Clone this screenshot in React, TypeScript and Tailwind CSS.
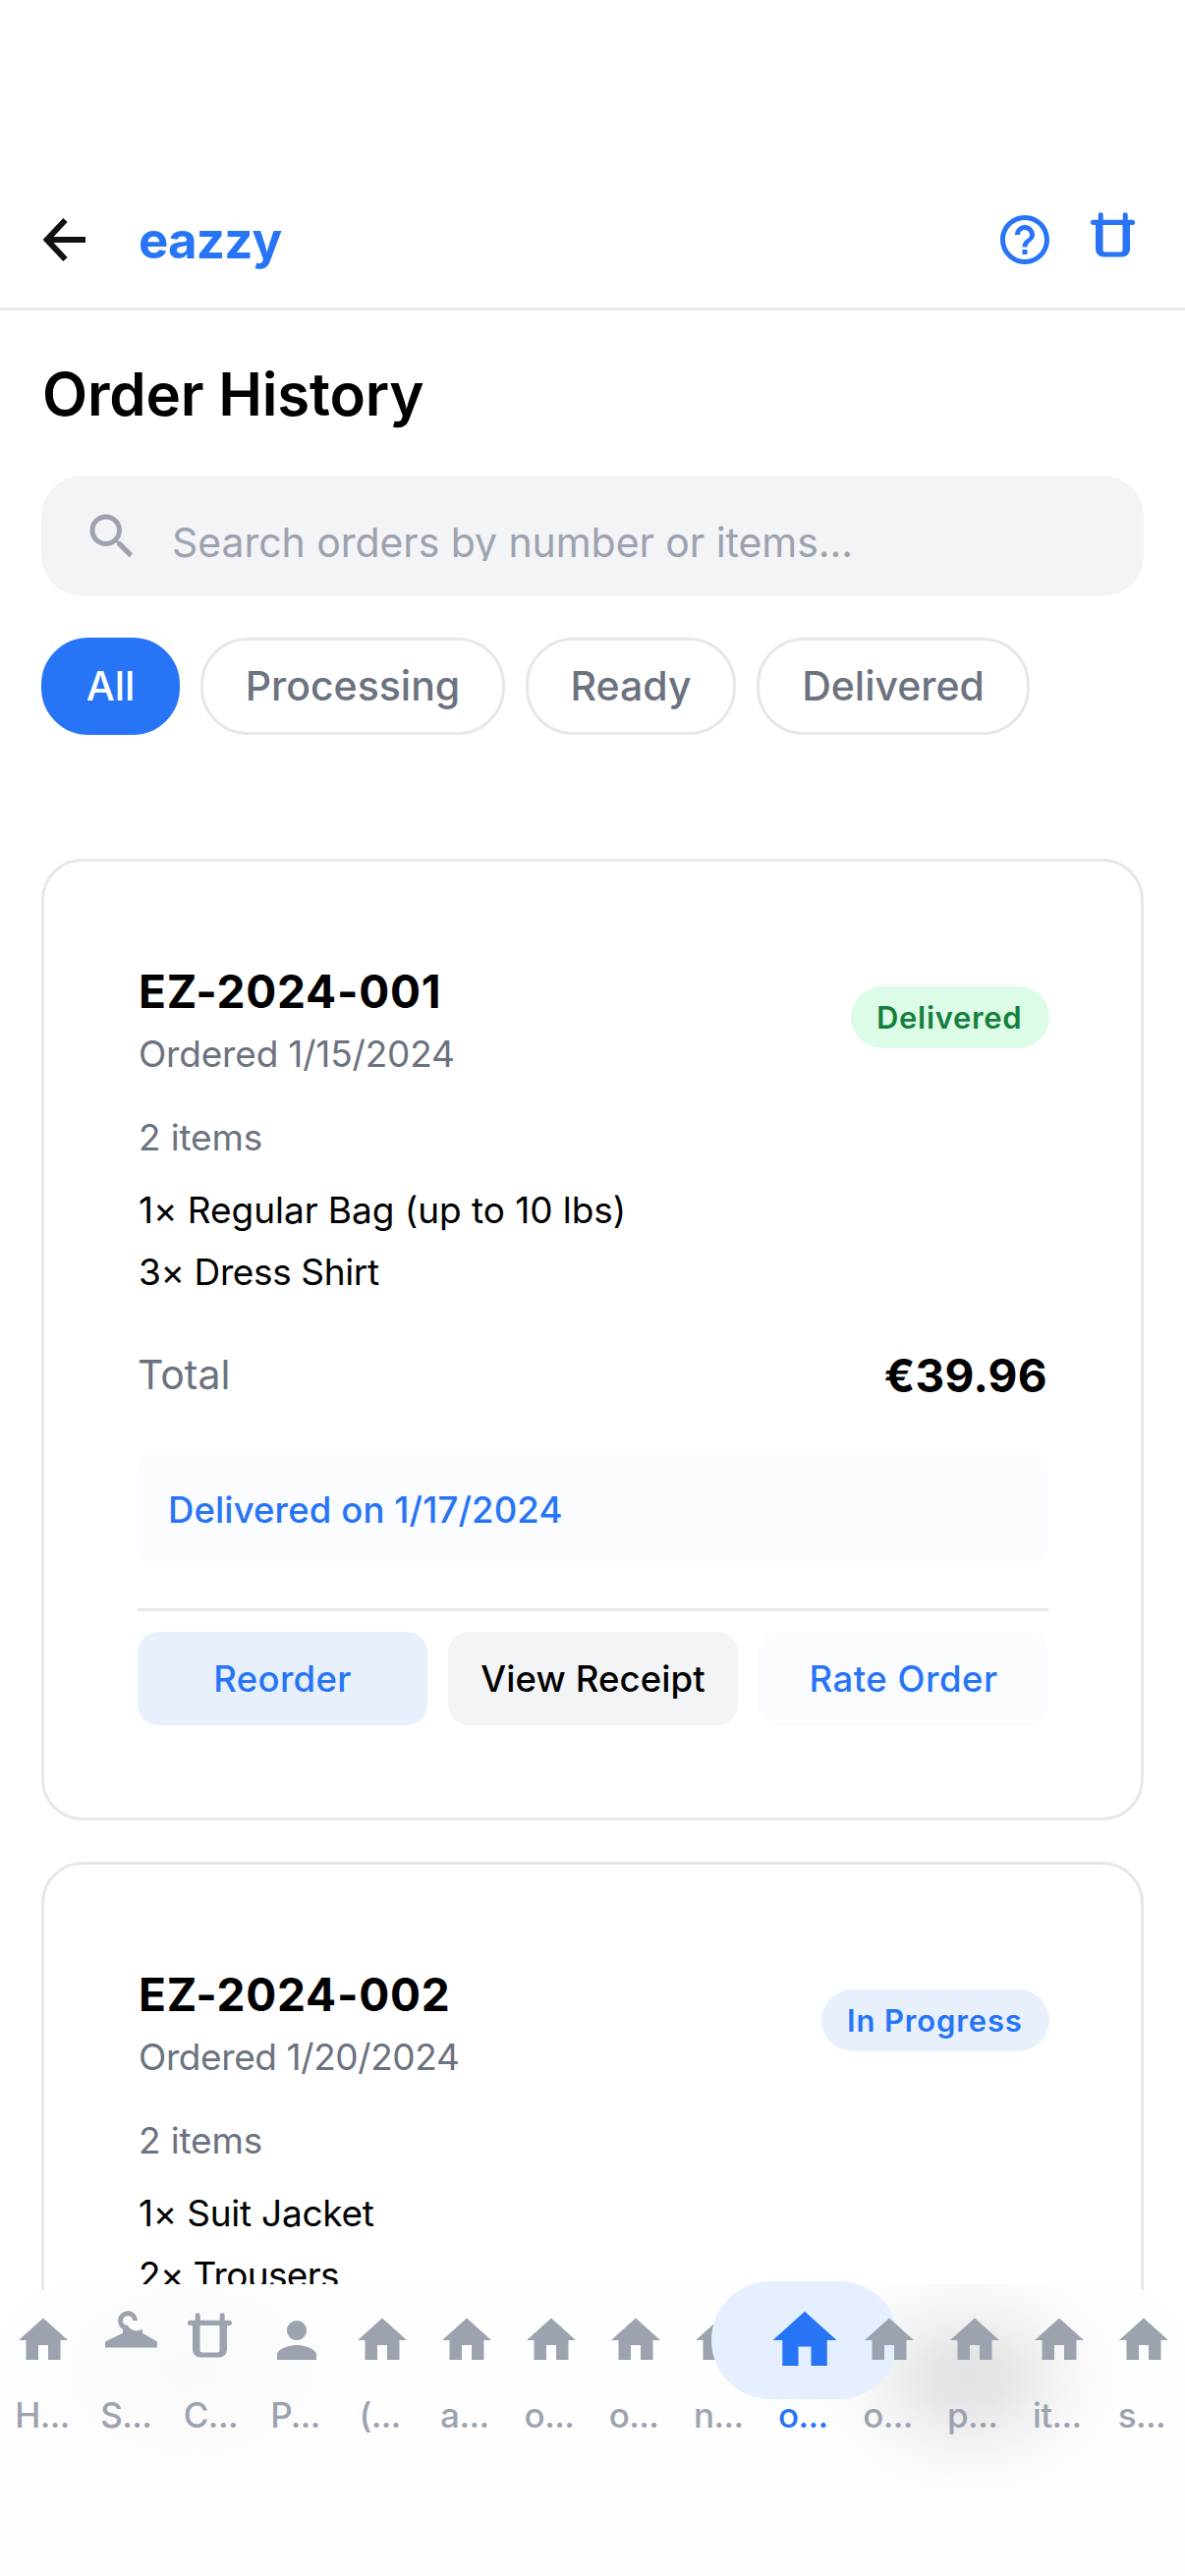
import React from 'react';
import { MdHelpOutline, MdHome, MdPerson, MdSearch } from 'react-icons/md';
import clsx from 'clsx';

function BackArrow() {
  return (
    <svg viewBox="0 0 46 46" className="size-[46px]" fill="none" stroke="#111111" strokeWidth="6">
      <path d="M24.5 3 L5.7 23 L24.5 43" />
      <path d="M6.5 23 H45" />
    </svg>
  );
}

function Basket() {
  return (
    <svg viewBox="0 0 60 60" className="size-[60px]" fill="currentColor">
      <rect x="12.7" y="2.2" width="5" height="14" rx="2.5" />
      <rect x="37.7" y="2.2" width="5" height="14" rx="2.5" />
      <rect x="5" y="9.8" width="45" height="5.2" rx="2.5" />
      <path
        fillRule="evenodd"
        d="M10 11 H45 V39.5 A8 8 0 0 1 37 47.5 H18 A8 8 0 0 1 10 39.5 Z M17.5 15 V40.5 A2 2 0 0 0 19.5 42.5 H35.5 A2 2 0 0 0 37.5 40.5 V15 Z"
      />
    </svg>
  );
}

function Hanger() {
  return (
    <svg viewBox="0 0 60 60" className="size-[60px] overflow-visible" fill="currentColor">
      <path d="M37.5 10 A7.5 7.5 0 1 0 26.5 16.8" fill="none" stroke="currentColor" strokeWidth="5" />
      <path d="M25 16 L28 14.5 L30 14.8 C31 18 36 20.8 40 20.6 Q43 20.2 45 18.5 V22.8 L60 31.5 V37.6 H7 V31.5 L25 22.8 Z" />
    </svg>
  );
}

const filters = [
  { label: 'All', width: 'w-[141px]' },
  { label: 'Processing', width: 'w-[310px]' },
  { label: 'Ready', width: 'w-[214px]' },
  { label: 'Delivered', width: 'w-[278px]' },
];

type Order = {
  number: string;
  ordered: string;
  orderedTracking: string;
  status: string;
  badge: string;
  count: string;
  items: { text: string; tracking: string }[];
  summary?: { total: string; note: string };
};

const orders: Order[] = [
  {
    number: 'EZ-2024-001',
    ordered: 'Ordered 1/15/2024',
    orderedTracking: 'tracking-[-0.18px]',
    status: 'Delivered',
    badge: 'w-[202px] tracking-[0.69px] bg-[#dcfce7] text-[#15803d]',
    count: '2 items',
    items: [
      { text: '1× Regular Bag (up to 10 lbs)', tracking: 'tracking-[-0.05px]' },
      { text: '3× Dress Shirt', tracking: 'tracking-[-0.38px]' },
    ],
    summary: { total: '€39.96', note: 'Delivered on 1/17/2024' },
  },
  {
    number: 'EZ-2024-002',
    ordered: 'Ordered 1/20/2024',
    orderedTracking: 'tracking-[-0.4px]',
    status: 'In Progress',
    badge: 'w-[232px] tracking-[0.86px] bg-[#e8f0fe] text-[#2775f6]',
    count: '2 items',
    items: [
      { text: '1× Suit Jacket', tracking: 'tracking-[-0.25px]' },
      { text: '2× Trousers', tracking: 'tracking-[-0.66px]' },
    ],
  },
];

function OrderCard({ order }: { order: Order }) {
  return (
    <article className="h-[979px] rounded-[42px] border-[3px] border-[#e5e7eb] bg-white pt-[102px] pr-[94px] pl-[95px]">
      <div className="flex h-[117px] items-start justify-between pl-px">
        <div>
          <h2 className="text-[46px] leading-[60px] font-bold tracking-[0.75px]">{order.number}</h2>
          <p className={clsx('mt-[10px] text-[37px] leading-[48px] text-[#6b7280]', order.orderedTracking)}>
            {order.ordered}
          </p>
        </div>
        <span
          className={clsx(
            'mt-[25px] -mr-px flex h-[63px] items-center rounded-full pl-[26px] text-[31px] leading-none font-semibold whitespace-nowrap',
            order.badge,
          )}
        >
          {order.status}
        </span>
      </div>
      <p className="mt-[38px] pl-px text-[37px] leading-[48px] tracking-[-0.16px] text-[#6b7280]">{order.count}</p>
      <ul className="mt-[26px] flex flex-col gap-[15px] pl-px">
        {order.items.map((item) => (
          <li key={item.text} className={clsx('text-[37px] leading-[48px]', item.tracking)}>
            {item.text}
          </li>
        ))}
      </ul>
      {order.summary && (
        <>
          <div className="mt-[51px] flex h-[60px] items-center justify-between">
            <span className="text-[41px] text-[#6b7280]">Total</span>
            <span className="mr-px text-[46px] font-bold tracking-[0.33px]">{order.summary.total}</span>
          </div>
          <div className="mt-[49px] flex h-[116px] items-center rounded-[21px] bg-[#fafcff] pl-[31px] text-[36.5px] font-medium tracking-[0.12px] text-[#2775f6]">
            {order.summary.note}
          </div>
          <div className="mt-[42px] grid grid-cols-3 gap-[21px] border-t-[3px] border-[#e5e7eb] pt-[21px] text-[36.5px] font-medium">
            <button className="h-[95px] rounded-[21px] bg-[#e8f0fe] pt-[2px] tracking-[0.32px] text-[#2775f6]">
              Reorder
            </button>
            <button className="h-[95px] rounded-[21px] bg-[#f3f4f6] pt-[2px] tracking-[0.1px]">View Receipt</button>
            <button className="h-[95px] rounded-[21px] bg-[#fafcff] pt-[2px] tracking-[0.52px] text-[#2775f6]">
              Rate Order
            </button>
          </div>
        </>
      )}
    </article>
  );
}

type IconKind = 'home' | 'hanger' | 'basket' | 'person';

const tabs: { label: string; icon: IconKind }[] = [
  { label: 'H...', icon: 'home' },
  { label: 'S...', icon: 'hanger' },
  { label: 'C...', icon: 'basket' },
  { label: 'P...', icon: 'person' },
  { label: '(...', icon: 'home' },
  { label: 'a...', icon: 'home' },
  { label: 'o...', icon: 'home' },
  { label: 'o...', icon: 'home' },
  { label: 'n...', icon: 'home' },
  { label: 'o...', icon: 'home' },
  { label: 'o...', icon: 'home' },
  { label: 'p...', icon: 'home' },
  { label: 'it...', icon: 'home' },
  { label: 's...', icon: 'home' },
];

const activeTab = 9;

function TabIcon({ kind, active }: { kind: IconKind; active: boolean }) {
  if (kind === 'hanger') return <Hanger />;
  if (kind === 'basket') return <Basket />;
  if (kind === 'person') return <MdPerson className="size-[60px]" />;
  return <MdHome className={active ? 'relative size-[78px] shrink-0' : 'size-[60px]'} />;
}

function TabBar() {
  return (
    <nav className="absolute inset-x-0 top-[2325px] h-[297px] rounded-t-[72px] bg-[#fefefe] bg-[radial-gradient(ellipse_150px_115px_at_986px_95px,#e2e2e2_0%,#e6e6e6_25%,#f0f0f0_50%,#f8f8f8_75%,#fcfcfc_95%,transparent_125%),radial-gradient(ellipse_190px_130px_at_193px_88px,#f8f9f9,transparent)]">
      <div className="-mr-px ml-px flex pt-[27px]">
        {tabs.map((tab, i) => (
          <div
            key={i}
            className={clsx(
              'flex w-0 flex-1 flex-col items-center',
              i >= activeTab && 'relative',
              i === activeTab ? 'text-[#2775f6]' : 'text-[#9ca3af]',
            )}
          >
            {i === activeTab && (
              <span className="absolute -top-[30px] left-1/2 h-[120px] w-[190px] -translate-x-1/2 rounded-full bg-[#e6efff]" />
            )}
            <span className="flex size-[60px] items-center justify-center">
              <TabIcon kind={tab.icon} active={i === activeTab} />
            </span>
            <span
              className={clsx(
                'relative mt-[25px] text-[35px] leading-[42px] font-medium tracking-[-0.6px] whitespace-nowrap',
                i === 0 ? 'mr-[2px]' : 'mr-[4px]',
              )}
            >
              {tab.label}
            </span>
          </div>
        ))}
      </div>
    </nav>
  );
}

export default function App() {
  return (
    <div className="relative h-[2622px] w-[1206px] overflow-hidden bg-white font-[Inter,sans-serif] text-black">
      <header className="flex h-[316px] items-center border-b-[3px] border-[#e5e7eb] pt-[175px] pr-[41px] pl-[42px]">
        <BackArrow />
        <span className="mt-[2px] ml-[53px] text-[51px] leading-[60px] font-bold tracking-[-0.85px] text-[#2775f6]">
          eazzy
        </span>
        <div className="ml-auto flex gap-8 text-[#2775f6]">
          <MdHelpOutline className="size-[60px]" />
          <Basket />
        </div>
      </header>

      <main className="px-[42px]">
        <h1 className="mt-[49px] ml-px text-[60px] leading-[72px] font-semibold tracking-[-0.2px]">Order History</h1>

        <div className="mt-[47px] flex h-[123px] items-center rounded-[42px] bg-[#f3f4f6] pl-[42px] text-[#9ca3af]">
          <MdSearch className="size-[60px]" />
          <span className="mt-[13px] ml-[31px] h-[38px] overflow-hidden text-[41px] leading-[38px] tracking-[-0.06px]">
            Search orders by number or items...
          </span>
        </div>

        <div className="mt-[42px] flex gap-[21px]">
          {filters.map((f, i) => (
            <button
              key={f.label}
              className={clsx(
                'h-[99px] rounded-[48px] border-[3px] text-[41px] font-medium',
                f.width,
                i === 0 ? 'border-[#2775f6] bg-[#2775f6] text-white' : 'border-[#e5e7eb] text-[#6b7280]',
              )}
            >
              {f.label}
            </button>
          ))}
        </div>

        <section className="mt-[126px] flex flex-col gap-[42px]">
          {orders.map((order) => (
            <OrderCard key={order.number} order={order} />
          ))}
        </section>
      </main>

      <TabBar />
    </div>
  );
}
